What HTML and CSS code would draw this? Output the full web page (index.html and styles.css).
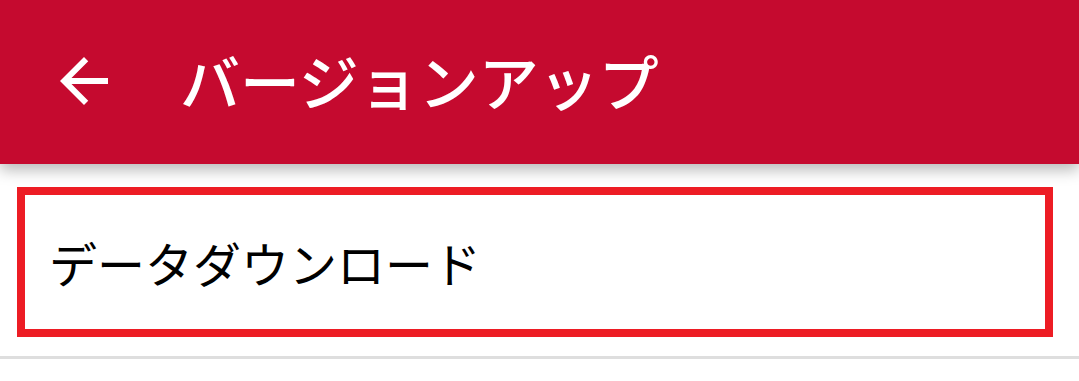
FILE: index.html
```html
<!DOCTYPE html>
<html lang="ja">
<head>
<meta charset="utf-8">
<title>バージョンアップ</title>
<link rel="stylesheet" href="styles.css">
</head>
<body>
<header class="appbar">
  <button class="back" aria-label="戻る">
    <svg viewBox="0 0 24 24" width="72" height="72"><path fill="#fff" d="M20 11H7.83l5.59-5.59L12 4l-8 8 8 8 1.41-1.41L7.83 13H20v-2z"/></svg>
  </button>
  <h1 class="title">バージョンアップ</h1>
</header>
<main class="content">
  <div class="item">データダウンロード</div>
  <div class="divider"></div>
</main>
</body>
</html>
```
FILE: styles.css
```css
html, body {
  margin: 0;
  padding: 0;
  background: #ffffff;
  font-family: "Noto Sans CJK JP", "Noto Sans", sans-serif;
  overflow: hidden;
}
.appbar {
  position: relative;
  z-index: 1;
  height: 164px;
  background: #c50a2f;
  display: flex;
  align-items: center;
  box-shadow: 0 6px 14px rgba(0, 0, 0, 0.28);
}
.back {
  margin: 0 0 2px 48px;
  padding: 0;
  border: 0;
  background: none;
  width: 72px;
  height: 72px;
  display: flex;
}
.title {
  margin: 0 0 4px 60px;
  color: #ffffff;
  font-size: 60px;
  font-weight: 500;
  line-height: 1;
}
.content {
  padding: 23px 26px 0 17px;
}
.item {
  height: 134px;
  border: 8px solid #ed1c24;
  display: flex;
  align-items: center;
  padding-left: 24px;
  font-size: 48px;
  color: #000000;
  line-height: 1;
}
.divider {
  margin: 19px -26px 0 -17px;
  height: 3px;
  background: #dedede;
}
```
